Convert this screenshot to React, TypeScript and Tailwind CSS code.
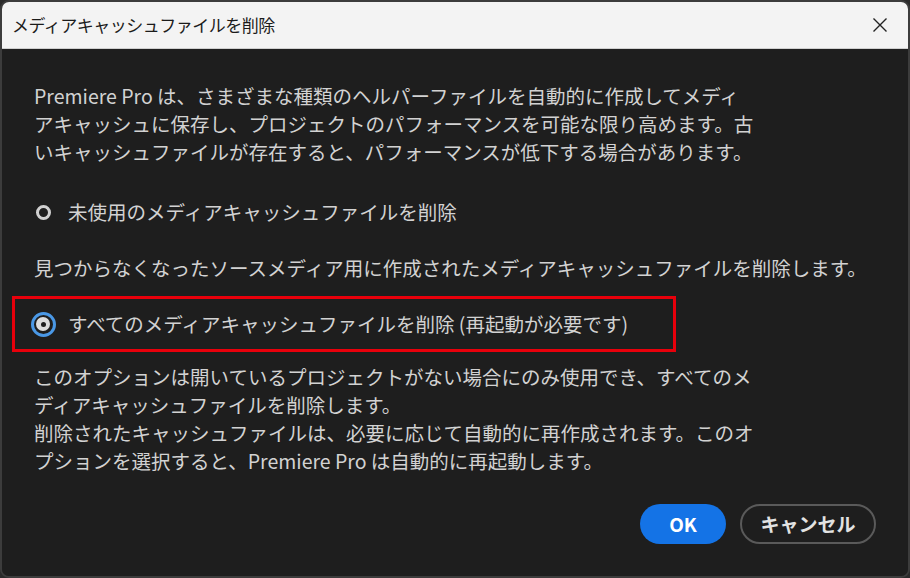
import React from 'react';

const font = { fontFamily: '"Noto Sans CJK JP", "Noto Sans", sans-serif' };

function Radio({ checked }: { checked?: boolean }) {
  return (
    <div className="flex h-6 w-6 items-center justify-center">
      {checked ? (
        <div className="flex h-[25px] w-[25px] shrink-0 items-center justify-center rounded-full border-[3px] border-[#4a98e6]">
          <div className="flex h-[14px] w-[14px] items-center justify-center rounded-full bg-[#dcdcdc]">
            <div className="h-[5px] w-[5px] rounded-full bg-[#1e1e1e]" />
          </div>
        </div>
      ) : (
        <div className="h-[15px] w-[15px] shrink-0 rounded-full border-[3px] border-[#d0d0d0]" />
      )}
    </div>
  );
}

export default function App() {
  return (
    <div className="h-[578px] w-[910px] bg-[#2a2a2a]" style={font}>
      <div className="flex h-full w-full flex-col overflow-hidden rounded-[9px] border-2 border-[#3c3c3c]">
        {/* title bar */}
        <div className="flex h-[47px] shrink-0 items-center justify-between border-b border-[#cfcfcf] bg-[#f3f3f3] pl-[10px] pr-[20px]">
          <span className="text-[17px] tracking-[-0.5px] text-[#1b1b1b]">メディアキャッシュファイルを削除</span>
          <svg width="16" height="16" viewBox="0 0 16 16" className="text-[#222]">
            <path d="M1.5 1.5 L14.5 14.5 M14.5 1.5 L1.5 14.5" stroke="currentColor" strokeWidth="1.4" fill="none" />
          </svg>
        </div>

        {/* body */}
        <div className="flex flex-1 flex-col bg-[#1e1e1e] px-[32px] pt-[33px] text-[19.5px] leading-[28px] text-[#d2d2d2]">
          <p className="whitespace-nowrap">
            Premiere Pro は、さまざまな種類のヘルパーファイルを自動的に作成してメディ
            <br />
            アキャッシュに保存し、プロジェクトのパフォーマンスを可能な限り高めます。古
            <br />
            いキャッシュファイルが存在すると、パフォーマンスが低下する場合があります。
          </p>

          <div className="ml-[-3px] mt-[32px] flex items-center gap-[13px]">
            <Radio />
            <span className="whitespace-nowrap">未使用のメディアキャッシュファイルを削除</span>
          </div>

          <p className="mt-[28px] whitespace-nowrap">
            見つからなくなったソースメディア用に作成されたメディアキャッシュファイルを削除します。
          </p>

          <div className="ml-[-22px] mt-[14px] flex h-[56px] w-[664px] items-center gap-[13px] border-[3px] border-[#e8000b] pl-[16px]">
            <Radio checked />
            <span className="whitespace-nowrap">すべてのメディアキャッシュファイルを削除 (再起動が必要です)</span>
          </div>

          <p className="mt-[11px] whitespace-nowrap">
            このオプションは開いているプロジェクトがない場合にのみ使用でき、すべてのメ
            <br />
            ディアキャッシュファイルを削除します。
            <br />
            削除されたキャッシュファイルは、必要に応じて自動的に再作成されます。このオ
            <br />
            プションを選択すると、Premiere Pro は自動的に再起動します。
          </p>

          <div className="mt-[29px] flex justify-end gap-[14px]">
            <button className="flex h-[40px] w-[86px] items-center justify-center rounded-full bg-[#1473e6] text-[19px] font-bold text-white">
              OK
            </button>
            <button className="flex h-[40px] w-[136px] items-center justify-center rounded-full border-2 border-[#5a5a5a] text-[19px] font-bold text-[#e2e2e2]">
              キャンセル
            </button>
          </div>
        </div>
      </div>
    </div>
  );
}
